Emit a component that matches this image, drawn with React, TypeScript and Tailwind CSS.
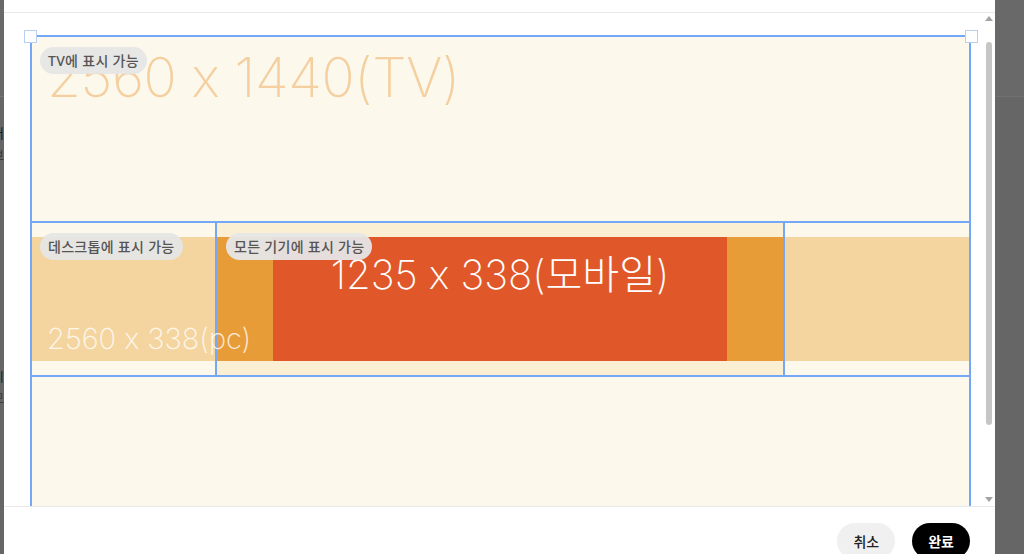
import React from 'react';

const thin = { fontFamily: 'Inter, "Noto Sans CJK KR", sans-serif' };

const Pill = ({ label, className }: { label: string; className: string }) => (
    <div
        className={`absolute z-10 h-[27px] px-[8px] rounded-full bg-[#e6e6e6]/95 text-[#555] text-[14px] font-medium tracking-[0.3px] flex items-center whitespace-nowrap ${className}`}
        style={{ fontFamily: '"Noto Sans", "Noto Sans CJK KR", sans-serif' }}
    >
        {label}
    </div>
);

const Handle = ({ className }: { className: string }) => (
    <div className={`absolute z-20 w-[13px] h-[13px] bg-white border border-[#b9d0f3] ${className}`} />
);

const Canvas = () => {
    return (
        <div className="relative w-[941px] border-2 border-[#74a8f6] bg-[#fdf8ec] flex flex-col shrink-0">
            <Handle className="-left-[8px] -top-[7px]" />
            <Handle className="-right-[9px] -top-[7px]" />

            {/* TV 영역 */}
            <div className="relative h-[184px] pl-[15px] pt-[13px]">
                <Pill label="TV에 표시 가능" className="left-[8px] top-[10px]" />
                <div className="text-[55px] leading-none font-extralight tracking-[-0.4px] text-[#f4cf9f] whitespace-nowrap [font-feature-settings:'calt'_0]" style={thin}>
                    2560 x 1440(TV)
                </div>
            </div>

            {/* 데스크톱 / 모바일 */}
            <div className="flex flex-row h-[156px] border-y-2 border-[#74a8f6]">
                <div className="relative w-[183px] py-[14px]">
                    <Pill label="데스크톱에 표시 가능" className="left-[8px] top-[10px]" />
                    <div className="h-[124px] bg-[#f4d5a0] flex items-end pl-[15px] pb-[8px]">
                        <span className="text-[29px] leading-none font-extralight text-white/80 whitespace-nowrap relative z-[5] [font-feature-settings:'calt'_0]" style={thin}>
                            2560 x 338(pc)
                        </span>
                    </div>
                </div>
                <div className="relative w-[570px] border-x-2 border-[#74a8f6] bg-[#faefd3] py-[14px]">
                    <Pill label="모든 기기에 표시 가능" className="left-[9px] top-[10px]" />
                    <div className="h-[124px] bg-[#e89c37] flex flex-row px-[56px]">
                        <div className="flex-1 bg-[#e0582a] flex justify-center pt-[18px]">
                            <span className="text-[40px] leading-none font-extralight text-white whitespace-nowrap [font-feature-settings:'calt'_0]" style={thin}>
                                1235 x 338(모바일)
                            </span>
                        </div>
                    </div>
                </div>
                <div className="flex-1 py-[14px]">
                    <div className="h-[124px] bg-[#f4d5a0]" />
                </div>
            </div>

            <div className="h-[186px]" />
        </div>
    );
};

const Scrollbar = () => (
    <div className="w-[12px] shrink-0 flex flex-col items-center pt-[3px] pb-[4px]">
        <div className="w-0 h-0 border-x-[4px] border-x-transparent border-b-[5px] border-b-[#a3a3a3]" />
        <div className="mt-[21px] w-[6px] h-[383px] rounded-full bg-[#c6c6c6]" />
        <div className="flex-1" />
        <div className="w-0 h-0 border-x-[4px] border-x-transparent border-t-[5px] border-t-[#a3a3a3]" />
    </div>
);

const BehindStrip = () => (
    <div className="w-[4px] h-full shrink-0 bg-[#666] overflow-hidden relative" style={{ fontFamily: '"Noto Sans CJK KR", sans-serif' }}>
        <div className="h-[97px] bg-[#696969] border-b border-[#747474]" />
        <div className="absolute right-0 top-[122px] text-[13px] leading-[22px] text-[#1a1a1a] text-right whitespace-nowrap">
            <div>설정 더</div>
            <div className="text-[#3a3a3a]">개인 정보</div>
        </div>
        <div className="absolute right-0 top-[365px] text-[13px] leading-[22px] text-[#1a1a1a] text-right whitespace-nowrap">
            <div>가능 시</div>
            <div className="text-[#3a3a3a]">안내 모</div>
        </div>
    </div>
);

export default function App() {
    return (
        <div className="w-[1024px] h-[554px] flex flex-row overflow-hidden bg-[#666]">
            <BehindStrip />
            <div className="w-[991px] h-full bg-white flex flex-col shrink-0">
                <div className="h-[13px] shrink-0 border-b border-[#e9e9e9]" />
                <div className="h-[493px] shrink-0 flex flex-row overflow-hidden">
                    <div className="flex-1 overflow-hidden pl-[26px] pt-[22px]">
                        <Canvas />
                    </div>
                    <Scrollbar />
                </div>
                <div
                    className="flex-1 border-t border-[#e9e9e9] flex flex-row justify-end items-start gap-[17px] pr-[25px] pt-[16px]"
                    style={{ fontFamily: '"Noto Sans CJK KR", sans-serif' }}
                >
                    <button className="h-[36px] px-[16px] rounded-full bg-[#f0f0f0] text-[#222] text-[14px] font-medium">취소</button>
                    <button className="h-[36px] px-[16px] rounded-full bg-black text-white text-[14px] font-bold">완료</button>
                </div>
            </div>
            <div className="flex-1 h-full bg-[#666] flex flex-col">
                <div className="h-[97px] bg-[#696969] border-b border-[#707070]" />
            </div>
        </div>
    );
}
